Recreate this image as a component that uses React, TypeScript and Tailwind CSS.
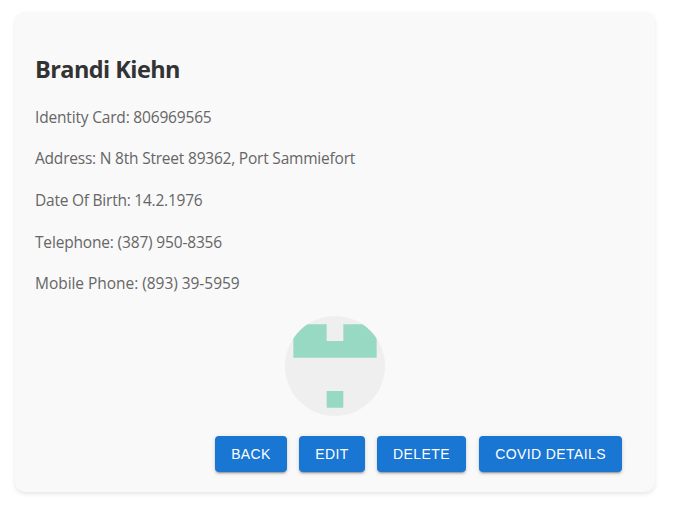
const details = [
  { text: "Identity Card: 806969565", spacing: "tracking-[-0.18px]" },
  { text: "Address: N 8th Street 89362, Port Sammiefort", spacing: "tracking-[-0.21px]" },
  { text: "Date Of Birth: 14.2.1976", spacing: "tracking-[-0.23px]" },
  { text: "Telephone: (387) 950-8356", spacing: "tracking-[-0.17px]" },
  { text: "Mobile Phone: (893) 39-5959", spacing: "tracking-[-0.04px]" },
];

const actions = [
  { label: "Back", size: "w-[72px]" },
  { label: "Edit", size: "ml-3 w-[66px]" },
  { label: "Delete", size: "ml-3 w-[89px]" },
  { label: "Covid Details", size: "ml-[13px] w-[143px]" },
];

function Avatar() {
  return (
    <svg viewBox="0 0 6 6" className="mx-auto block size-[100px] rounded-full bg-[#efefef]">
      <path d="M.5 .5h2v1h1v-1h2v2h-5zM2.5 4.5h1v1h-1z" fill="#98d9c4" />
    </svg>
  );
}

export default function App() {
  return (
    <main className="h-[508px] overflow-hidden bg-white pt-3 pl-[15px]">
      <section className="h-[480px] w-[640px] rounded-[10px] bg-[#f9f9f9] px-5 pt-[37.6px] font-['Open_Sans','Noto_Sans',sans-serif] shadow-[0_2px_4px_rgba(0,0,0,0.1)]">
        <h2 className="text-[23.5px] leading-[38.4px] font-bold tracking-[-0.57px] whitespace-nowrap text-[#333]">Brandi Kiehn</h2>
        <div className="mt-[16.9px] flex flex-col gap-4 text-[15.5px] leading-[25.6px] text-[#666]">
          {details.map(({ text, spacing }) => (
            <p key={text} className={"whitespace-nowrap " + spacing}>
              <span>{text}</span>
            </p>
          ))}
        </div>
        <div className="mt-[19.1px]">
          <Avatar />
        </div>
        <div className="mt-5 flex pl-[180px]">
          {actions.map(({ label, size }) => (
            <button
              key={label}
              className={
                "h-9 shrink-0 rounded-[4px] bg-[#1976d2] font-['Liberation_Sans',Arial,sans-serif] text-sm leading-[24.5px] font-normal tracking-[0.4px] whitespace-nowrap text-white uppercase shadow-[0_3px_1px_-2px_rgba(0,0,0,0.2),0_2px_2px_0_rgba(0,0,0,0.14),0_1px_5px_0_rgba(0,0,0,0.12)] " +
                size
              }
            >
              {label}
            </button>
          ))}
        </div>
      </section>
    </main>
  );
}
